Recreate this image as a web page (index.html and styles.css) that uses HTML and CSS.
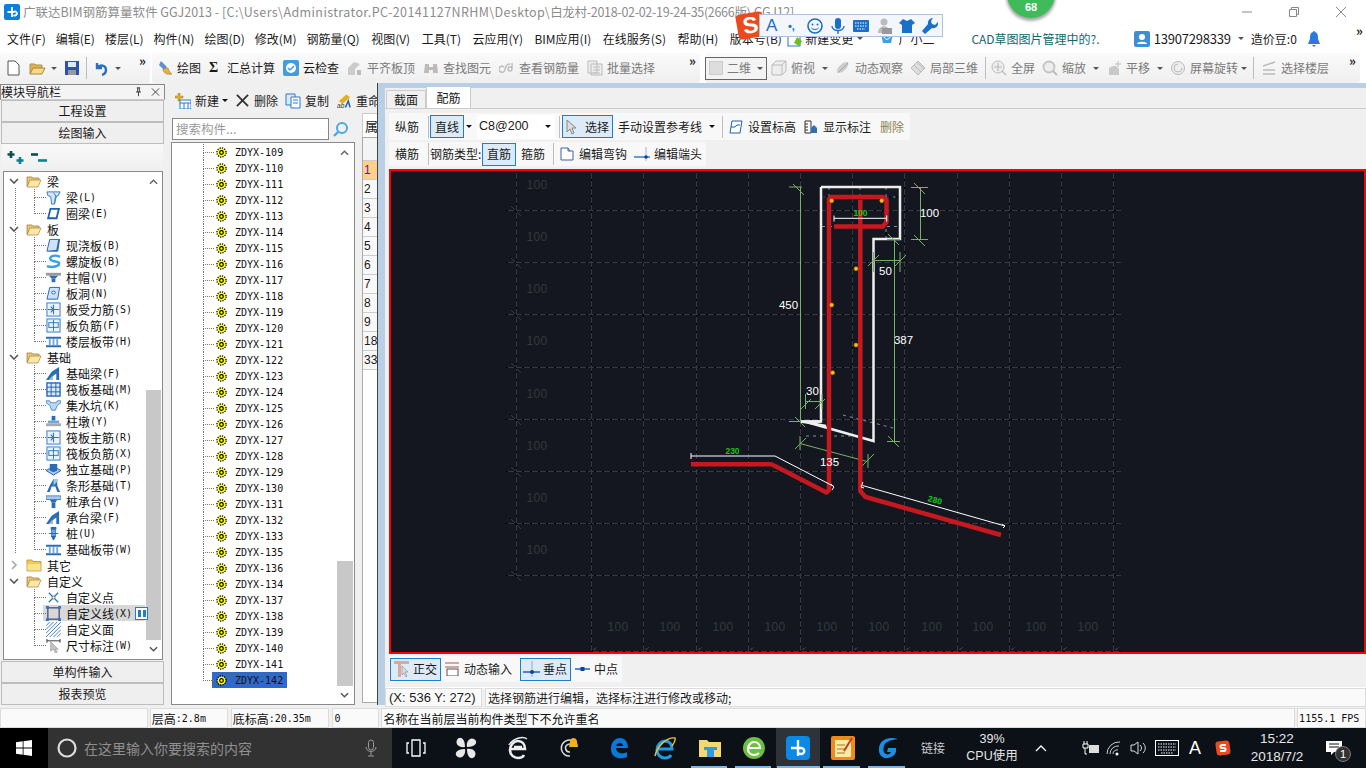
FILE: index.html
```html
<!DOCTYPE html>
<html lang="zh-CN">
<head>
<meta charset="utf-8">
<title>广联达BIM钢筋算量软件 GGJ2013</title>
<link rel="stylesheet" href="styles.css">
</head>
<body>
<svg class="defs" aria-hidden="true">
  <symbol id="gear" viewBox="0 0 12 12"><circle cx="6" cy="6" r="4.6" fill="#ff0"/><circle cx="6" cy="6" r="5" fill="none" stroke="#000" stroke-width="1.400" stroke-dasharray="1.400 1.200"/><circle cx="6" cy="6" r="2" fill="none" stroke="#000" stroke-width="1.300"/></symbol>
  <symbol id="fopen" viewBox="0 0 16 16"><path d="M1 13V4h5l1 1h6v3H4z" fill="#e8c56f" stroke="#9a7a30" stroke-width=".7"/><path d="M1 14l3-7h11l-3 7z" fill="#fbe8a8" stroke="#a88838" stroke-width=".7"/></symbol>
  <symbol id="fclosed" viewBox="0 0 16 16"><path d="M1 14V3h5l1 1.500h8V14z" fill="#f4c94e" stroke="#a88838" stroke-width=".7"/><path d="M1.500 7h13v6.500h-13z" fill="#fbe38c"/></symbol>
  <symbol id="chevd" viewBox="0 0 10 6"><path d="M1 1l4 4 4-4" fill="none" stroke="#555" stroke-width="1.600"/></symbol>
  <symbol id="chevu" viewBox="0 0 10 6"><path d="M1 5l4-4 4 4" fill="none" stroke="#666" stroke-width="1.600"/></symbol>
  <symbol id="chevr" viewBox="0 0 6 10"><path d="M1 1l4 4-4 4" fill="none" stroke="#aaa" stroke-width="1.600"/></symbol>
  <symbol id="beam" viewBox="0 0 16 16"><path d="M1 2h14l-2 4-3 1-1 8H6L5 7 2 6z" fill="#d4e6f8" stroke="#2a78c8"/><path d="M8 3l3 4-2 8" fill="none" stroke="#2a78c8"/></symbol>
  <symbol id="ring" viewBox="0 0 16 16"><path d="M4 2h11l-3 12H1zM5.500 4l-2 8h7l2-8z" fill-rule="evenodd" fill="#2060b0"/></symbol>
  <symbol id="slab" viewBox="0 0 16 16"><path d="M4 1.500h10.500l-2 12.500H1z" fill="#cfe2f8" stroke="#1f5fb0"/><path d="M1.500 14l11 0 2-12.500-1.500 0-2 11z" fill="#2a6cc0"/></symbol>
  <symbol id="spiral" viewBox="0 0 16 16"><path d="M15 3C8 0 3 3 5 6s9 1 9 4-7 5-13 3" fill="none" stroke="#3aa0e8" stroke-width="2.600"/></symbol>
  <symbol id="cap" viewBox="0 0 16 16"><rect y="3" width="16" height="3" fill="#999"/><path d="M3 6h10l-3 3H6z" fill="#2a6cb8"/><rect x="6" y="9" width="4" height="4" fill="#2a6cb8"/></symbol>
  <symbol id="hole" viewBox="0 0 16 16"><path d="M4 1.500h10.500l-2 12.500H1z" fill="#cfe2f8" stroke="#1f5fb0"/><ellipse cx="8" cy="7" rx="2" ry="1.500" fill="#fff" stroke="#1f5fb0"/></symbol>
  <symbol id="sqcross" viewBox="0 0 16 16"><rect x="1" y="1" width="14" height="14" fill="#eaf3fd" stroke="#2a78c8"/><path d="M2 8h12M8 3v10M5 5l3 3-3 3" fill="none" stroke="#2a78c8" stroke-width="1.200"/></symbol>
  <symbol id="sqzhong" viewBox="0 0 16 16"><rect x="1" y="1" width="14" height="14" fill="#eaf3fd" stroke="#2a78c8"/><rect x="3" y="5" width="10" height="5" fill="none" stroke="#2a78c8"/><path d="M8 2v12" stroke="#2a78c8"/></symbol>
  <symbol id="band" viewBox="0 0 16 16"><path d="M0 3h16v2H0zM0 12h16v2H0z" fill="#2a6cb8"/><path d="M3 5h2v7H3zM7 5h2v7H7zM11 5h2v7h-2z" fill="#6fa8dc"/></symbol>
  <symbol id="fbeam" viewBox="0 0 16 16"><path d="M0 15l6-9 8-5v14h-3V8l-4 3v4z" fill="#2a6cb8"/><path d="M3 15l4-5v5z" fill="#9cc4ec"/></symbol>
  <symbol id="raft" viewBox="0 0 16 16"><rect x="1" y="1" width="14" height="14" fill="#dbe9f8" stroke="#1f5fb0" stroke-width="1.400"/><path d="M5.500 1v14M10.500 1v14M1 5.500h14M1 10.500h14" stroke="#1f5fb0"/></symbol>
  <symbol id="pit" viewBox="0 0 16 16"><path d="M0 3h4l1 2h6l1-2h4v2l-4 3-2 5H6L4 8 0 5z" fill="#bcd6ef" stroke="#2a78c8" stroke-width=".8"/></symbol>
  <symbol id="pier" viewBox="0 0 16 16"><rect x="6" y="2" width="4" height="5" fill="#2a6cb8"/><rect x="2" y="7" width="12" height="3" fill="#6fa8dc"/><rect y="10" width="16" height="3" fill="#aaa"/></symbol>
  <symbol id="iso" viewBox="0 0 16 16"><path d="M0 9l8-4 8 4-8 5z" fill="#a9c9ea" stroke="#1f5fb0"/><path d="M4 2h8v7l-4 2-4-2z" fill="#2a6cb8"/></symbol>
  <symbol id="strip" viewBox="0 0 16 16"><path d="M1 15l3-7 4-7h4v7l3 7h-3l-2-6H6l-2 6z" fill="#2a6cb8"/><path d="M8 1h4v3l-4 4z" fill="#9cc4ec"/></symbol>
  <symbol id="pcap" viewBox="0 0 16 16"><rect y="2" width="16" height="4" fill="#a9c9ea" stroke="#1f5fb0" stroke-width=".7"/><path d="M4 6h8l-2 3H6z" fill="#2a6cb8"/><rect x="6" y="9" width="4" height="6" fill="#2a6cb8"/></symbol>
  <symbol id="pile" viewBox="0 0 16 16"><rect x="5" y="1" width="6" height="3" fill="#2a6cb8"/><rect x="6" y="4" width="4" height="7" fill="#6fa8dc" stroke="#1f5fb0" stroke-width=".7"/><path d="M3 8h10M6 11h4l-2 4z" stroke="#1f5fb0" fill="#2a6cb8"/></symbol>
  <symbol id="point" viewBox="0 0 16 16"><path d="M3 3l10 10M13 3L3 13" stroke="#2a78c8" stroke-width="1.400"/><circle cx="8" cy="8" r="1.600" fill="#fff" stroke="#333" stroke-width=".6"/></symbol>
  <symbol id="line" viewBox="0 0 16 16"><rect x="2" y="2" width="12" height="12" fill="none" stroke="#111a55"/><path d="M0 0h3v3H0zM13 0h3v3h-3zM0 13h3v3H0zM13 13h3v3h-3z" fill="#2a78c8"/></symbol>
  <symbol id="hatch" viewBox="0 0 16 16"><path d="M0 4L4 0M0 8l8-8M0 12L12 0M0 16L16 0M4 16L16 4M8 16l8-8M12 16l4-4" stroke="#3b7fc8"/></symbol>
  <symbol id="dim" viewBox="0 0 16 16"><path d="M1 1v4M15 1v4M1 3h14" stroke="#333"/><path d="M5 4v10l3-2 2 4 2-1-2-3h3z" fill="#c4c4c4" stroke="#888" stroke-width=".6"/></symbol>
</svg>

<div class="app">
  <header class="titlebar">
    <svg class="logo" viewBox="0 0 16 16"><rect width="16" height="16" rx="2" fill="#0a7fe0"/><path d="M8 3v10M3.500 8h6a2 2 0 1 1 0 3" fill="none" stroke="#fff" stroke-width="1.800"/></svg>
    <span class="title-text">广联达BIM钢筋算量软件 GGJ2013 - <span class="t-path">[C:\Users\Administrator.PC-20141127NRHM\Desktop\</span><span class="t-file">白龙村-2018-02-02-19-24-35(2666版).GGJ12]</span></span>
    <div class="winctl">
      <svg viewBox="0 0 12 12"><path d="M1 6h10" stroke="#888"/></svg>
      <svg viewBox="0 0 12 12"><path d="M1.500 3.500h7v7h-7zM3.500 3.500v-2h7v7h-2" fill="none" stroke="#888"/></svg>
      <svg viewBox="0 0 12 12"><path d="M1 1l10 10M11 1L1 11" stroke="#888"/></svg>
    </div>
  </header>

  <nav class="menubar">
    <span class="menu">文件(F)</span><span class="menu">编辑(E)</span><span class="menu">楼层(L)</span><span class="menu">构件(N)</span><span class="menu">绘图(D)</span><span class="menu">修改(M)</span><span class="menu">钢筋量(Q)</span><span class="menu">视图(V)</span><span class="menu">工具(T)</span><span class="menu">云应用(Y)</span><span class="menu">BIM应用(I)</span><span class="menu">在线服务(S)</span><span class="menu">帮助(H)</span><span class="menu">版本号(B)</span>
    <svg class="ic16 m-change" viewBox="0 0 16 16"><rect x="1" y="1" width="12" height="14" fill="#fff" stroke="#2a78c8"/><path d="M10 6l5 4-3 5-5-3z" fill="#6cc020"/></svg>
    <span class="menu m-tight">新建变更</span><span class="arrow ml4"></span>
    <svg class="ic16 m-xiao" viewBox="0 0 16 16"><path d="M2 3h12l-2 9H4z" fill="#3aa0e8"/><path d="M5 6c1 3 5 3 6 0" fill="none" stroke="#fff"/></svg>
    <span class="menu m-tight2">广小二</span>
    <span class="cad-note">CAD草图图片管理中的?.</span>
    <svg class="ic16 m-user" viewBox="0 0 16 16"><rect width="16" height="16" rx="2" fill="#3f8fd0"/><circle cx="8" cy="6" r="3" fill="#fff"/><path d="M3 13c0-3 10-3 10 0z" fill="#fff"/></svg>
    <span class="user-id">13907298339</span><span class="arrow ml7"></span>
    <span class="beans">造价豆:0</span>
    <svg class="ic16 m-bell" viewBox="0 0 16 16"><path d="M8 0c-1 0-1 1-1 1C4 2 4 5 4 8l-2 5h12l-2-5c0-3 0-6-3-7 0 0 0-1-1-1zM6 14h4l-2 2z" fill="#2a78e0"/></svg>
    <span class="more more-menu">»</span>
  </nav>

  <section class="toolbar">
    <div class="tgroup g1">
      <svg class="ic-new" viewBox="0 0 13 16"><path d="M1 1h7l4 4v10H1z" fill="#fff" stroke="#555"/></svg>
      <svg class="ic-open ml9" viewBox="0 0 17 16"><path d="M1 14V4h5l1 1h6v3" fill="#e8b040" stroke="#996"/><path d="M1 14l3-6h12l-3 6z" fill="#f7d98a" stroke="#a88838"/></svg>
      <span class="arrow ml5"></span>
      <svg class="ic-save ml8" viewBox="0 0 14 14"><rect width="14" height="14" fill="#3050b0"/><rect x="3" y="1" width="8" height="5" fill="#dfe8f8"/><rect x="3" y="9" width="8" height="5" fill="#999"/></svg>
      <i class="vsep ml7"></i>
      <svg class="ic-undo ml7" viewBox="0 0 14 16"><path d="M3 3v5h5M3 8c3-4 9-3 9 2 0 2-1 4-4 5" fill="none" stroke="#2a70c0" stroke-width="2.400"/></svg>
      <span class="arrow ml7"></span>
      <span class="more more-1">»</span>
    </div>
    <div class="tgroup g2">
      <div class="tool"><svg class="ic16" viewBox="0 0 16 16"><path d="M4 1l6 6-3 3-5-5z" fill="#5a8fd0"/><path d="M6 9c0 4 4 6 9 5-2-1-3-3-4-6z" fill="#e8b040" stroke="#a08030" stroke-width=".6"/></svg>绘图</div>
      <div class="tool"><b class="sigma">Σ</b>汇总计算</div>
      <div class="tool"><svg class="ic16" viewBox="0 0 16 16"><rect width="16" height="16" rx="2" fill="#3f9de0"/><circle cx="8" cy="8" r="5" fill="#fff"/><path d="M5 8l2 2 4-4" fill="none" stroke="#3f9de0" stroke-width="1.500"/></svg>云检查</div>
      <div class="tool off"><svg class="ic16" viewBox="0 0 16 16"><path d="M1 15V8l6-6 6 2-5 5v6z" fill="#ccc"/><path d="M10 10h4v5h-4z" fill="#bbb"/></svg>平齐板顶</div>
      <div class="tool off"><svg class="ic16" viewBox="0 0 16 16"><path d="M2 4h4v9H1zM10 4h4l1 9h-5zM6 7h4v3H6z" fill="#bbb"/></svg>查找图元</div>
      <div class="tool off"><svg class="ic16" viewBox="0 0 16 16"><path d="M5 7a3 3 0 1 0 1 2c1-4 3-5 5-5M9 9a2 2 0 1 0 4 0 2 2 0 1 0-4 0M13 9V3" fill="none" stroke="#bbb" stroke-width="1.400"/></svg>查看钢筋量</div>
      <div class="tool off"><svg class="ic16" viewBox="0 0 16 16"><path d="M1 1h9v12H1zM4 4h11v11H4z" fill="#eee" stroke="#bbb"/><path d="M6 7h7M6 10h7M6 13h7" stroke="#bbb"/></svg>批量选择</div>
      <span class="more more-2">»</span>
    </div>
    <div class="tgroup g3">
      <div class="view-select"><i class="swatch"></i>二维<span class="arrow ml9"></span></div>
      <div class="tool off tool-first"><svg class="ic16" viewBox="0 0 16 16"><path d="M1 5l4-4h10v10l-4 4H1zM1 5h10v10M11 5l4-4" fill="#eee" stroke="#bbb"/></svg>俯视</div>
      <span class="arrow"></span>
      <div class="tool off"><svg class="ic16" viewBox="0 0 16 16"><path d="M2 13C1 8 8 1 13 2c2 4-5 12-11 11z" fill="#ccc"/><path d="M4 12L13 3" stroke="#aaa"/></svg>动态观察</div>
      <div class="tool off"><svg class="ic16" viewBox="0 0 16 16"><path d="M1 8l7-7 7 7-7 7z" fill="#ddd" stroke="#bbb"/><path d="M4 5l7 7M7 2l7 7" stroke="#bbb"/></svg>局部三维</div>
      <i class="vsep"></i>
      <div class="tool off tool-near"><svg class="ic16" viewBox="0 0 16 16"><circle cx="7" cy="7" r="6" fill="#eee" stroke="#bbb"/><path d="M7 3v8M3 7h8M11 11l4 4" stroke="#bbb" stroke-width="1.200"/></svg>全屏</div>
      <div class="tool off"><svg class="ic16" viewBox="0 0 16 16"><circle cx="7" cy="7" r="5.500" fill="#eee" stroke="#c4c4c4" stroke-width="1.800"/><path d="M11 11l4 4" stroke="#bbb" stroke-width="2"/></svg>缩放</div>
      <span class="arrow"></span>
      <div class="tool off"><svg class="ic16" viewBox="0 0 16 16"><path d="M3 15V8l4-2 3 0 3 3v6z" fill="#c8c8c8"/><path d="M12 1v6M9 4h6" stroke="#bbb"/></svg>平移</div>
      <span class="arrow"></span>
      <div class="tool off"><svg class="ic16" viewBox="0 0 16 16"><circle cx="8" cy="8" r="6.500" fill="#eee" stroke="#bbb"/><path d="M8 4a4 4 0 1 0 4 4" fill="none" stroke="#bbb"/></svg>屏幕旋转</div>
      <span class="arrow arrow-tight"></span>
      <i class="vsep"></i>
      <div class="tool off"><svg class="ic16" viewBox="0 0 16 16"><path d="M2 6l12-4M2 10h12M2 14h12" stroke="#bbb" stroke-width="1.600"/></svg>选择楼层</div>
      <span class="more more-3">»</span>
    </div>
  </section>

  <main class="main">
    <aside class="nav">
      <div class="nav-head"><span>模块导航栏</span><span class="nav-ctl"><svg viewBox="0 0 10 12"><path d="M3 1h4M4 1v5M6 1v5M2 6h6M5 6v5" stroke="#222" fill="none"/></svg><svg viewBox="0 0 10 10"><path d="M1 1l8 8M9 1L1 9" stroke="#333"/></svg></span></div>
      <div class="nav-btn">工程设置</div>
      <div class="nav-btn">绘图输入</div>
      <div class="tree-tools">
        <svg class="tt" viewBox="0 0 18 15"><path d="M4 1v7M0.500 4.500h7" stroke="#0a5050" stroke-width="2.600"/><path d="M13 7v7M9.500 10.500h7" stroke="#0a8090" stroke-width="2.600"/></svg>
        <svg class="tt" viewBox="0 0 18 15"><path d="M1 4.500h7" stroke="#0a5050" stroke-width="2.600"/><path d="M8 10.500h9" stroke="#0a8090" stroke-width="2.600"/></svg>
      </div>
      <div class="tree-box">
        <div class="tree-rows">
          <div class="grp"><svg class="chev"><use href="#chevd"/></svg><svg class="folder"><use href="#fopen"/></svg><span class="zh">梁</span></div>
          <div class="leaf"><svg class="lic"><use href="#beam"/></svg><span class="zh">梁</span>(L)</div>
          <div class="leaf end"><svg class="lic"><use href="#ring"/></svg><span class="zh">圈梁</span>(E)</div>
          <div class="grp"><svg class="chev"><use href="#chevd"/></svg><svg class="folder"><use href="#fopen"/></svg><span class="zh">板</span></div>
          <div class="leaf"><svg class="lic"><use href="#slab"/></svg><span class="zh">现浇板</span>(B)</div>
          <div class="leaf"><svg class="lic"><use href="#spiral"/></svg><span class="zh">螺旋板</span>(B)</div>
          <div class="leaf"><svg class="lic"><use href="#cap"/></svg><span class="zh">柱帽</span>(V)</div>
          <div class="leaf"><svg class="lic"><use href="#hole"/></svg><span class="zh">板洞</span>(N)</div>
          <div class="leaf"><svg class="lic"><use href="#sqcross"/></svg><span class="zh">板受力筋</span>(S)</div>
          <div class="leaf"><svg class="lic"><use href="#sqzhong"/></svg><span class="zh">板负筋</span>(F)</div>
          <div class="leaf end"><svg class="lic"><use href="#band"/></svg><span class="zh">楼层板带</span>(H)</div>
          <div class="grp"><svg class="chev"><use href="#chevd"/></svg><svg class="folder"><use href="#fopen"/></svg><span class="zh">基础</span></div>
          <div class="leaf"><svg class="lic"><use href="#fbeam"/></svg><span class="zh">基础梁</span>(F)</div>
          <div class="leaf"><svg class="lic"><use href="#raft"/></svg><span class="zh">筏板基础</span>(M)</div>
          <div class="leaf"><svg class="lic"><use href="#pit"/></svg><span class="zh">集水坑</span>(K)</div>
          <div class="leaf"><svg class="lic"><use href="#pier"/></svg><span class="zh">柱墩</span>(Y)</div>
          <div class="leaf"><svg class="lic"><use href="#sqcross"/></svg><span class="zh">筏板主筋</span>(R)</div>
          <div class="leaf"><svg class="lic"><use href="#sqzhong"/></svg><span class="zh">筏板负筋</span>(X)</div>
          <div class="leaf"><svg class="lic"><use href="#iso"/></svg><span class="zh">独立基础</span>(P)</div>
          <div class="leaf"><svg class="lic"><use href="#strip"/></svg><span class="zh">条形基础</span>(T)</div>
          <div class="leaf"><svg class="lic"><use href="#pcap"/></svg><span class="zh">桩承台</span>(V)</div>
          <div class="leaf"><svg class="lic"><use href="#fbeam"/></svg><span class="zh">承台梁</span>(F)</div>
          <div class="leaf"><svg class="lic"><use href="#pile"/></svg><span class="zh">桩</span>(U)</div>
          <div class="leaf end"><svg class="lic"><use href="#band"/></svg><span class="zh">基础板带</span>(W)</div>
          <div class="grp"><svg class="chev chev-r"><use href="#chevr"/></svg><svg class="folder"><use href="#fclosed"/></svg><span class="zh">其它</span></div>
          <div class="grp"><svg class="chev"><use href="#chevd"/></svg><svg class="folder"><use href="#fopen"/></svg><span class="zh">自定义</span></div>
          <div class="leaf"><svg class="lic"><use href="#point"/></svg><span class="zh">自定义点</span></div>
          <div class="leaf on"><svg class="lic"><use href="#line"/></svg><span class="zh">自定义线</span>(X)<svg class="attr" viewBox="0 0 13 13"><rect x=".5" y=".5" width="12" height="12" fill="#fff" stroke="#2a78c8"/><path d="M3 3h3v7H3zM8 3h3v7H8z" fill="#2a78c8"/></svg></div>
          <div class="leaf"><svg class="lic"><use href="#hatch"/></svg><span class="zh">自定义面</span></div>
          <div class="leaf end"><svg class="lic"><use href="#dim"/></svg><span class="zh">尺寸标注</span>(W)</div>
        </div>
        <div class="sb sb-nav"><svg class="sb-up"><use href="#chevu" x="3" y="7" width="9" height="6"/></svg><i class="sb-space"></i><i class="sb-thumb"></i><svg class="sb-down"><use href="#chevd" x="3" y="6" width="9" height="6"/></svg></div>
      </div>
      <div class="nav-btn nav-btn-low">单构件输入</div>
      <div class="nav-btn">报表预览</div>
    </aside>

    <section class="comp">
      <div class="comp-bar">
        <div class="tool tool-plain"><svg class="ic16" viewBox="0 0 16 16"><path d="M3 0h2v3h3v2H5v3H3V5H0V3h3z" fill="#e0b020" stroke="#a08010" stroke-width=".5"/><rect x="5" y="7" width="11" height="9" fill="#fff" stroke="#2a78c8"/><path d="M5 10h11M9 10v6M13 10v6" stroke="#2a78c8"/></svg>新建<span class="arrow dark arrow-close"></span></div>
        <svg class="ic-del" viewBox="0 0 14 14"><path d="M1 1l12 12M13 1L1 13" stroke="#333" stroke-width="2"/></svg><span class="plain">删除</span>
        <svg class="ic16 ml7" viewBox="0 0 16 16"><path d="M1 1h9v11H1z" fill="#dbe9f8" stroke="#2a78c8"/><path d="M6 4h9v11H6z" fill="#fff" stroke="#2a78c8"/><path d="M8 7h5M8 10h5" stroke="#2a78c8"/></svg><span class="plain near">复制</span>
        <svg class="ic-ren ml8" viewBox="0 0 16 16"><path d="M2 8l8-7 4 3-8 7z" fill="#e0b020"/><text class="ab" x="0" y="15">ab</text><path d="M9 15l3-7 2 7" stroke="#2a60b0" fill="none" stroke-width="1.600"/></svg><span class="plain nearer">重命</span>
      </div>
      <div class="comp-body">
        <div class="comp-list">
          <div class="searchrow"><div class="search">搜索构件...</div><svg class="mag" viewBox="0 0 16 16"><circle cx="9" cy="7" r="5" fill="none" stroke="#4aa8e8" stroke-width="2"/><path d="M5 11l-4 4" stroke="#4aa8e8" stroke-width="2.400"/></svg></div>
          <div class="ztree">
            <div class="zrows">
              <div class="zr"><span class="zl"><svg class="gi"><use href="#gear"/></svg>ZDYX-109</span></div>
              <div class="zr"><span class="zl"><svg class="gi"><use href="#gear"/></svg>ZDYX-110</span></div>
              <div class="zr"><span class="zl"><svg class="gi"><use href="#gear"/></svg>ZDYX-111</span></div>
              <div class="zr"><span class="zl"><svg class="gi"><use href="#gear"/></svg>ZDYX-112</span></div>
              <div class="zr"><span class="zl"><svg class="gi"><use href="#gear"/></svg>ZDYX-113</span></div>
              <div class="zr"><span class="zl"><svg class="gi"><use href="#gear"/></svg>ZDYX-114</span></div>
              <div class="zr"><span class="zl"><svg class="gi"><use href="#gear"/></svg>ZDYX-115</span></div>
              <div class="zr"><span class="zl"><svg class="gi"><use href="#gear"/></svg>ZDYX-116</span></div>
              <div class="zr"><span class="zl"><svg class="gi"><use href="#gear"/></svg>ZDYX-117</span></div>
              <div class="zr"><span class="zl"><svg class="gi"><use href="#gear"/></svg>ZDYX-118</span></div>
              <div class="zr"><span class="zl"><svg class="gi"><use href="#gear"/></svg>ZDYX-119</span></div>
              <div class="zr"><span class="zl"><svg class="gi"><use href="#gear"/></svg>ZDYX-120</span></div>
              <div class="zr"><span class="zl"><svg class="gi"><use href="#gear"/></svg>ZDYX-121</span></div>
              <div class="zr"><span class="zl"><svg class="gi"><use href="#gear"/></svg>ZDYX-122</span></div>
              <div class="zr"><span class="zl"><svg class="gi"><use href="#gear"/></svg>ZDYX-123</span></div>
              <div class="zr"><span class="zl"><svg class="gi"><use href="#gear"/></svg>ZDYX-124</span></div>
              <div class="zr"><span class="zl"><svg class="gi"><use href="#gear"/></svg>ZDYX-125</span></div>
              <div class="zr"><span class="zl"><svg class="gi"><use href="#gear"/></svg>ZDYX-126</span></div>
              <div class="zr"><span class="zl"><svg class="gi"><use href="#gear"/></svg>ZDYX-127</span></div>
              <div class="zr"><span class="zl"><svg class="gi"><use href="#gear"/></svg>ZDYX-128</span></div>
              <div class="zr"><span class="zl"><svg class="gi"><use href="#gear"/></svg>ZDYX-129</span></div>
              <div class="zr"><span class="zl"><svg class="gi"><use href="#gear"/></svg>ZDYX-130</span></div>
              <div class="zr"><span class="zl"><svg class="gi"><use href="#gear"/></svg>ZDYX-131</span></div>
              <div class="zr"><span class="zl"><svg class="gi"><use href="#gear"/></svg>ZDYX-132</span></div>
              <div class="zr"><span class="zl"><svg class="gi"><use href="#gear"/></svg>ZDYX-133</span></div>
              <div class="zr"><span class="zl"><svg class="gi"><use href="#gear"/></svg>ZDYX-135</span></div>
              <div class="zr"><span class="zl"><svg class="gi"><use href="#gear"/></svg>ZDYX-136</span></div>
              <div class="zr"><span class="zl"><svg class="gi"><use href="#gear"/></svg>ZDYX-134</span></div>
              <div class="zr"><span class="zl"><svg class="gi"><use href="#gear"/></svg>ZDYX-137</span></div>
              <div class="zr"><span class="zl"><svg class="gi"><use href="#gear"/></svg>ZDYX-138</span></div>
              <div class="zr"><span class="zl"><svg class="gi"><use href="#gear"/></svg>ZDYX-139</span></div>
              <div class="zr"><span class="zl"><svg class="gi"><use href="#gear"/></svg>ZDYX-140</span></div>
              <div class="zr"><span class="zl"><svg class="gi"><use href="#gear"/></svg>ZDYX-141</span></div>
              <div class="zr end"><span class="zl sel"><svg class="gi"><use href="#gear"/></svg>ZDYX-142</span></div>
            </div>
            <div class="sb sb-comp"><svg class="sb-up"><use href="#chevu" x="3" y="7" width="9" height="6"/></svg><i class="sb-space"></i><i class="sb-thumb"></i><svg class="sb-down"><use href="#chevd" x="3" y="6" width="9" height="6"/></svg></div>
          </div>
        </div>
        <div class="props">
          <div class="props-tab">属</div>
          <div class="props-table">
            <div class="ph"></div>
            <div class="pr cur">1</div><div class="pr">2</div><div class="pr">3</div><div class="pr">4</div><div class="pr">5</div><div class="pr">6</div><div class="pr">7</div><div class="pr">8</div><div class="pr">9</div><div class="pr">18</div><div class="pr">33</div>
          </div>
        </div>
      </div>
    </section>

    <div class="split"></div>

    <section class="editor">
      <div class="tabs"><span class="tab">截面</span><span class="tab cur">配筋</span></div>
      <div class="row row1">
        <span>纵筋</span><i class="vsep ml9"></i>
        <span class="btn ml1 w34">直线</span><span class="arrow dark ml2"></span>
        <div class="combo ml5">C8@200<span class="arrow dark"></span></div>
        <i class="vsep ml4"></i>
        <span class="btn ml2 w51"><svg class="ic-cur" viewBox="0 0 12 16"><path d="M1 1v12l3-3 2 5 2-1-2-5h4z" fill="#ddd" stroke="#888"/></svg>选择</span>
        <span class="ml5">手动设置参考线</span><span class="arrow dark ml7"></span>
        <i class="vsep ml7"></i>
        <svg class="ic14 ml6" viewBox="0 0 14 14"><path d="M3 1h10l-2 12H1z" fill="#fff" stroke="#2060b0"/><path d="M2 7h4l2-2 3 0" fill="none" stroke="#2060b0"/></svg>
        <span class="ml5">设置标高</span>
        <svg class="ic14 ml8" viewBox="0 0 14 14"><path d="M1 1h6v12H1z" fill="none" stroke="#333"/><path d="M7 8l3-3 3 3v5H7z" fill="#3070b0"/><path d="M1 4h3M1 7h3M1 10h3" stroke="#333"/></svg>
        <span class="ml5">显示标注</span>
        <span class="ml9 muted">删除</span>
      </div>
      <div class="row row2">
        <span>横筋</span><i class="vsep ml9"></i>
        <span class="ml1 wtype">钢筋类型:</span>
        <span class="btn ml1 w34">直筋</span>
        <span class="ml5">箍筋</span><i class="vsep ml8"></i>
        <svg class="ic14 ml6" viewBox="0 0 14 14"><path d="M1 1h7l2 3h3v9H1z" fill="#fff" stroke="#4060a0"/><path d="M8 1v3h2" fill="none" stroke="#4060a0"/></svg>
        <span class="ml5">编辑弯钩</span>
        <svg class="ic16 ml7" viewBox="0 0 16 16"><path d="M0 11h16" stroke="#3070c0" stroke-width="1.400"/><path d="M12 1v14" stroke="#99b8d8"/><circle cx="12" cy="11" r="1.800" fill="#1040a0"/></svg>
        <span class="ml4">编辑端头</span>
      </div>

      <div class="canvas">
        <svg class="drawing" viewBox="389 169 977 485">
          <defs>
            <g id="grid">
              <path d="M506 210.500H1121M506 262.500H1121M506 314.500H1121M506 367.500H1121M506 419.500H1121M506 471.500H1121M506 523.500H1121M506 575.500H1121M591 651.500H1121"/>
              <path d="M516.500 171V576M591.500 171V651M643.500 171V651M696.500 171V651M748.500 171V651M800.500 171V651M852.500 171V651M904.500 171V651M957.500 171V651M1009.500 171V651M1061.500 171V651M1113.500 171V651"/>
              <path d="M510 205l11 11M510 257l11 11M510 309l11 11M510 362l11 11M510 414l11 11M510 466l11 11M510 518l11 11M510 570l11 11M592 651l5-4M644 651l5-4M697 651l5-4M749 651l5-4M801 651l5-4M853 651l5-4M905 651l5-4M958 651l5-4M1010 651l5-4M1062 651l5-4M1114 651l5-4"/>
            </g>
          </defs>
          <rect class="bg" x="389" y="169" width="977" height="485"/>
          <use href="#grid" class="grid-base"/>
          <use href="#grid" class="grid-dash"/>
          <g class="glabel">
            <text x="537" y="189">100</text><text x="537" y="241">100</text><text x="537" y="293">100</text><text x="537" y="345">100</text><text x="537" y="398">100</text><text x="537" y="450">100</text><text x="537" y="502">100</text><text x="537" y="554">100</text>
            <text x="618" y="631">100</text><text x="670" y="631">100</text><text x="723" y="631">100</text><text x="775" y="631">100</text><text x="827" y="631">100</text><text x="879" y="631">100</text><text x="932" y="631">100</text><text x="983" y="631">100</text><text x="1036" y="631">100</text><text x="1088" y="631">100</text>
          </g>
          <path class="guide" d="M823 197H900M822 226.500H835M887 226.500H900M886 187V239M829 187V200M860 187V197M843 415l50 13M806 436H860"/>
          <path class="guide-k" d="M823 197H900M886 200V238"/>
          <polyline class="profile" points="821,187 900,187 900,239 873.500,239 873.500,441 810,423 801,421.500 821,421.500 821,187"/>
          <path class="cover" d="M801 421.500H821M826 426l-16-3"/>
          <path class="gdim" d="M800.500 187V421.500M789 187h13M793 184l11 11M920.500 187.500V239.500M911 187.500h17M914 183l11 11M911 239.500h17M914 235l11 11M873.500 260.500H900M873.500 252V272M868 266l11-11M900 252V272M895 266l11-11M894.500 239.500V441.500M887 239.500h13M888 234l11 11M887 441.500h13M888 436l11 11M805.500 401.500H822M805.500 394V409M801 409l10-10M822 394V409M815 409l10-10M800 443.500L867 461.500M795 449l11-11M800 436v14M868 454v14M861 467l13-13M789 421.500h11M795 417l10 10"/>
          <polyline class="rebar" points="834,226.500 883,226.500 886.500,222 886.500,200 883,197 831,197 829,199 829,490 826.500,492.500 775,466 771,464.300 691,464.300"/>
          <polyline class="rebar" points="860.300,200 860.300,491 865.500,497 1001,535"/>
          <path class="thin" d="M834 218.300H886.700M834 215.500v6M886.700 215.500v6M691 456H775L834 486.500M691 453v6M831 484l3 3-2 3M862.500 485.500L1005 526M863 482l-2 5 3 1M1002 524l3 2-2 2"/>
          <g class="dots"><circle cx="831.700" cy="200.700" r="2"/><circle cx="881.700" cy="200.700" r="2"/><circle cx="856" cy="268.700" r="2"/><circle cx="831.700" cy="305" r="2"/><circle cx="856" cy="345" r="2"/><circle cx="832.700" cy="372.700" r="2"/></g>
          <g class="dimtxt">
            <text x="788.500" y="309">450</text><text x="929.500" y="217">100</text><text x="885.500" y="275">50</text><text x="903.500" y="344">387</text><text x="812.500" y="395">30</text><text x="829.500" y="466">135</text>
          </g>
          <g class="greentxt">
            <text x="860.500" y="216">100</text><text x="732.500" y="454">230</text><text x="935" y="503" transform="rotate(16 935 500)">280</text>
          </g>
        </svg>
      </div>

      <div class="snapbar">
        <span class="btn ml1 w51 btn-snap"><svg class="ic-ortho" viewBox="0 0 17 18"><path d="M1 1h15v3H8v13H5V4H1z" fill="#d9a8a0"/><path d="M9 6l6 6-3 0 2 4-1 1-2-4-2 2z" fill="#ddd" stroke="#888" stroke-width=".6"/></svg>正交</span>
        <svg class="ic14 ml4" viewBox="0 0 14 14"><path d="M0 1h14M0 5h14" stroke="#a05a50" stroke-width="1.200"/><rect x="2" y="7" width="11" height="7" fill="#fff" stroke="#555"/></svg>
        <span class="ml5">动态输入</span>
        <span class="btn ml8 w51 btn-snap"><svg class="ic-ortho" viewBox="0 0 17 18"><path d="M0 12h17" stroke="#2f6cc0" stroke-width="1.600"/><path d="M9 1v16" stroke="#8ab0d8"/><circle cx="9" cy="12" r="2" fill="#123f9a"/></svg>垂点</span>
        <svg class="ic15 ml4" viewBox="0 0 15 6"><path d="M0 3h15" stroke="#2f6cc0" stroke-width="1.600"/><rect x="5.500" y="1" width="4" height="4" fill="#123f9a"/></svg>
        <span class="ml4">中点</span>
      </div>

      <div class="msgbar"><div class="coords">(X: 536 Y: 272)</div><div class="msg">选择钢筋进行编辑，选择标注进行修改或移动;</div></div>
    </section>
  </main>

  <footer class="status">
    <div class="cell s1"></div>
    <div class="cell s2"><span class="zh">层高</span>:2.8m</div>
    <div class="cell s3"><span class="zh">底标高</span>:20.35m</div>
    <div class="cell s4">0</div>
    <div class="cell s5"><span class="zh">名称在当前层当前构件类型下不允许重名</span></div>
    <div class="cell s6">1155.1 FPS</div>
  </footer>

  <div class="taskbar">
    <div class="start"><svg viewBox="0 0 16 16"><path d="M0 2.300l6.700-1V7.500H0zM7.500 1.200L16 0v7.500H7.500zM0 8.400h6.700v6.300l-6.700-1zM7.500 8.400H16V16l-8.500-1.200z" fill="#fff"/></svg></div>
    <div class="tsearch">
      <svg class="cortana" viewBox="0 0 20 20"><circle cx="10" cy="10" r="8.500" fill="none" stroke="#ddd" stroke-width="2.200"/></svg>
      <span class="tsearch-text">在这里输入你要搜索的内容</span>
      <svg class="mic" viewBox="0 0 12 18"><rect x="3.500" y="1" width="5" height="10" rx="2.500" fill="none" stroke="#999"/><path d="M1 8c0 6 10 6 10 0M6 13v4M3 17h6" fill="none" stroke="#999"/></svg>
    </div>
    <div class="tk w48"><svg viewBox="0 0 20 20"><path d="M6 2h8v16H6zM3 5H1v10h2M17 5h2v10h-2" fill="none" stroke="#fff" stroke-width="1.300"/></svg></div>
    <div class="tk w52"><svg class="big" viewBox="0 0 24 24"><path d="M11 11C5 12 1 8 3 4s8-3 8 7zM13 11c-1-6 3-10 7-8s3 8-7 8zM13 13c6-1 10 3 8 7s-8 3-8-7zM11 13c1 6-3 10-7 8s-3-8 7-8z" fill="#e8e8e8"/></svg></div>
    <div class="tk w52"><svg class="big" viewBox="0 0 24 24"><path d="M5 13h14c0-5-3-8-7-8s-8 4-8 9 4 8 8 8c3 0 5-1 6-3M8 11h8" fill="none" stroke="#eee" stroke-width="2.600"/><path d="M3 9C7 2 17 0 21 3" fill="none" stroke="#eee" stroke-width="1.400"/></svg></div>
    <div class="tk w52"><svg class="big" viewBox="0 0 24 24"><path d="M12 20a8 8 0 1 1 7-10M12 16a4 4 0 1 1 3-6" fill="none" stroke="#ddd" stroke-width="1.500"/><path d="M15 2a4 4 0 0 1 4 4l1 5H11l1-5a4 4 0 0 1 3-4z" fill="#f2b01e"/></svg></div>
    <div class="tk w46"><svg class="big" viewBox="0 0 24 24"><path d="M4 13c0-7 4-11 9-11 5 0 8 4 8 10H9c0 5 6 7 11 4v5c-7 3-16 1-16-8zm5-3h7c0-4-6-4-7 0z" fill="#0a78d7"/></svg></div>
    <div class="tk w46"><svg class="big" viewBox="0 0 24 24"><path d="M5 13h14c0-5-3-8-7-8s-8 4-8 9 4 8 8 8c3 0 5-1 6-3" fill="none" stroke="#1e9be6" stroke-width="3"/><path d="M2 20C4 10 14 1 22 2c1 3-2 6-3 8" fill="none" stroke="#f0c23c" stroke-width="1.400"/></svg></div>
    <div class="tk w44 run u36"><svg class="big" viewBox="0 0 24 24"><path d="M1 4h8l2 2h12v15H1z" fill="#f5d774"/><rect x="9" y="13" width="7" height="8" fill="#2e9be6"/><rect x="6" y="11" width="13" height="3" fill="#2e9be6"/></svg></div>
    <div class="tk w44 run u36"><svg class="big" viewBox="0 0 24 24"><circle cx="12" cy="12" r="11" fill="#6cc040"/><path d="M6 12h12c0-4-3-6-6-6s-6 3-6 7 3 6 6 6c2 0 4-1 5-2" fill="none" stroke="#fff" stroke-width="2.200"/></svg></div>
    <div class="tk w44 run active u44"><svg class="big" viewBox="0 0 24 24"><rect width="24" height="24" rx="4" fill="#0a8ae6"/><path d="M12 4v16M5 12h10a3 3 0 1 1-2 5" fill="none" stroke="#fff" stroke-width="2.400"/></svg></div>
    <div class="tk w45 run u36"><svg class="big" viewBox="0 0 24 24"><rect width="24" height="24" rx="2" fill="#f08a1e"/><rect x="4" y="4" width="16" height="17" fill="#fbe9a8"/><path d="M6 9h8M6 13h8M6 17h8" stroke="#b07020"/><path d="M21 2l-8 13" stroke="#c0401a" stroke-width="2"/></svg></div>
    <div class="tk w45 run u36"><svg class="big" viewBox="0 0 24 24"><path d="M22 3c-10-3-18 1-19 9-1 7 4 11 9 10 5-1 9-4 8-10h-8l-1 4h4c-1 2-3 3-5 2-3-1-3-5-2-8 1-4 6-6 14-7z" fill="#1a8fe8"/></svg></div>
    <div class="tktext w46">链接</div>
    <div class="cpu">39%<br>CPU使用</div>
    <div class="tk w26"><svg class="small" viewBox="0 0 14 14"><path d="M2 10l5-5 5 5" fill="none" stroke="#fff" stroke-width="1.300"/></svg></div>
    <div class="tray ml24"><svg viewBox="0 0 18 16"><path d="M3 1v3M6 1v3M2 4h5v4H2zM4 8v6h2" fill="none" stroke="#fff"/><rect x="8" y="5" width="10" height="8" fill="#ddd"/></svg></div>
    <div class="tray"><svg viewBox="0 0 18 16"><path d="M2 14a12 12 0 0 1 13-12M5 14a8 8 0 0 1 9-8M8 14a4 4 0 0 1 5-4" fill="none" stroke="#ccc"/><circle cx="12" cy="14" r="1.500" fill="#fff"/></svg></div>
    <div class="tray w22"><svg viewBox="0 0 18 16"><path d="M2 5h3l4-3v12l-4-3H2zM11 5c2 2 2 4 0 6M14 3c3 3 3 7 0 10" fill="none" stroke="#ddd"/></svg></div>
    <div class="tray kbd ml2"><svg viewBox="0 0 24 16"><rect x=".5" y=".5" width="23" height="15" fill="none" stroke="#fff"/><path d="M3 4h18M3 7h18M3 10h18M6 13h12" stroke="#fff" stroke-dasharray="1.500 1"/></svg></div>
    <div class="ime-a">A</div>
    <div class="tray kbd"><svg class="s-tray" viewBox="0 0 16 16"><rect x="1" y="1" width="14" height="14" rx="3" fill="#ec4a1c" transform="rotate(-8 8 8)"/><path d="M11 5H7a1.500 1.500 0 0 0 0 3h2a1.500 1.500 0 0 1 0 3H5" fill="none" stroke="#fff" stroke-width="2"/></svg></div>
    <div class="clock">15:22<br>2018/7/2</div>
    <div class="notif"><svg viewBox="0 0 16 16"><path d="M0 1h16v11H8l-3 3v-3H0z" fill="#fff"/><path d="M3 4h10M3 7h10" stroke="#111"/></svg><span class="badge">1</span></div>
  </div>
</div>

<div class="orb"><span>68</span></div>
<div class="ime-s">S</div>
<div class="ime">
  <span class="ime-letter">A</span>
  <span class="ime-comma">•,</span>
  <svg viewBox="0 0 16 16"><circle cx="8" cy="8" r="7" fill="none" stroke="#1a6fc8" stroke-width="1.600"/><circle cx="5.500" cy="6.500" r="1" fill="#1a6fc8"/><circle cx="10.500" cy="6.500" r="1" fill="#1a6fc8"/><path d="M4.500 10c1 2 6 2 7 0" fill="none" stroke="#1a6fc8"/></svg>
  <svg viewBox="0 0 16 16"><rect x="5" y="0" width="6" height="11" rx="3" fill="#1a6fc8"/><path d="M2 8c0 6 12 6 12 0M8 13v3" fill="none" stroke="#1a6fc8" stroke-width="1.400"/></svg>
  <svg viewBox="0 0 16 16"><rect y="2" width="16" height="12" rx="1" fill="#1a6fc8"/><path d="M2 5h12M2 8h12M4 11h8" stroke="#fff" stroke-dasharray="1.500 1"/></svg>
  <svg viewBox="0 0 16 16"><circle cx="8" cy="4" r="3.500" fill="#bbb"/><path d="M2 15c0-9 12-9 12 0z" fill="#bbb"/><rect x="6" y="10" width="10" height="6" fill="#999"/></svg>
  <svg viewBox="0 0 16 16"><path d="M4 1l4 2 4-2 4 4-3 2v8H3V7L0 5z" fill="#1a6fc8"/></svg>
  <svg viewBox="0 0 16 16"><path d="M11 0a5 5 0 0 0-5 6l-6 7 3 3 7-6a5 5 0 0 0 6-6l-3 3-3-1-1-3z" fill="#1a6fc8"/></svg>
</div>
</body>
</html>
```
FILE: styles.css
```css
* { box-sizing: border-box; }
html, body { margin: 0; padding: 0; width: 1366px; height: 768px; overflow: hidden; }
body { position: relative; font-family: "Noto Sans CJK SC", "Liberation Sans", sans-serif; font-size: 12px; color: #1a1a1a; background: #f0f0f0; line-height: 1; }
.defs { position: absolute; width: 0; height: 0; }
i { display: block; font-style: normal; }
svg { display: block; flex: none; }

.ml1 { margin-left: 1px; } .ml2 { margin-left: 2px; } .ml4 { margin-left: 4px; } .ml5 { margin-left: 5px; }
.ml6 { margin-left: 6px; } .ml7 { margin-left: 7px; } .ml8 { margin-left: 8px; } .ml9 { margin-left: 9px; } .ml24 { margin-left: 24px; }

.app { display: flex; flex-direction: column; width: 1366px; height: 768px; }

/* title */
.titlebar { height: 24px; background: #fff; display: flex; align-items: center; padding-left: 4px; color: #8c8c8c; font-size: 12.500px; }
.logo { width: 16px; height: 16px; margin-right: 3px; }
.title-text { white-space: nowrap; }
.t-path { letter-spacing: .4px; }
.t-file { letter-spacing: -.3px; }
.winctl { margin-left: auto; display: flex; align-items: center; }
.winctl svg { width: 12px; height: 12px; margin-right: 35px; }
.winctl svg:last-child { margin-right: 19px; }

/* menu */
.menubar { height: 29px; background: #fff; display: flex; align-items: center; padding-left: 7px; white-space: nowrap; position: relative; }
.menu { margin-right: 10px; }
.menu:nth-child(n+7) { margin-right: 11.500px; }
.m-change { margin-left: -6px; margin-right: 2px; }
.menu.m-tight { margin-right: 0; }
.m-xiao { margin-left: 16px; margin-right: 3px; }
.menu.m-tight2 { margin-right: 0; }
.cad-note { margin-left: 37px; color: #0c6a70; }
.m-user { margin-left: 34px; margin-right: 4px; }
.user-id { font-size: 13px; letter-spacing: -.2px; }
.beans { margin-left: 7px; }
.m-bell { margin-left: 9px; }
.more { font-weight: 700; font-size: 13px; color: #222; line-height: 10px; }
.more-menu { position: absolute; right: 3px; top: 2px; }

.arrow { display: block; flex: none; width: 0; height: 0; border-left: 3px solid transparent; border-right: 3px solid transparent; border-top: 3px solid #555; }
.arrow.dark { border-top-color: #111; }

/* toolbar */
.toolbar { height: 30px; background: #fff; display: flex; }
.tgroup { height: 30px; display: flex; align-items: center; background: linear-gradient(#fafafa, #efefef); border-radius: 3px; position: relative; }
.g1 { width: 150px; padding-left: 7px; }
.g2 { width: 548px; margin-left: 2px; padding-left: 5px; gap: 8px; }
.g3 { width: 655px; margin-left: 5px; gap: 7px; }
.more-1, .more-2, .more-3 { position: absolute; top: 3px; right: 4px; }
.ic-new { width: 13px; height: 16px; }
.ic-open { width: 17px; height: 16px; }
.ic-save { width: 14px; height: 14px; }
.ic-undo { width: 14px; height: 16px; }
.ic16 { width: 16px; height: 16px; }
.ic14 { width: 14px; height: 14px; }
.ic15 { width: 15px; height: 6px; }
.ic-ren { width: 15px; height: 16px; }
.vsep { width: 1px; height: 22px; background: #bdbdbd; flex: none; }
.tool { display: flex; align-items: center; gap: 4px; white-space: nowrap; }
.tool.off { color: #7a7a7a; }
.tool-first { margin-left: -3px; }
.sigma { font: 700 14px "Liberation Serif", serif; width: 10px; margin-right: 4px; }
.view-select { width: 62px; height: 23px; border: 1px solid #666; display: flex; align-items: center; padding-left: 3px; gap: 4px; color: #7a7a7a; background: #f3f3f3; }
.view-select .arrow { margin-left: auto; margin-right: 3px; }
.swatch { width: 14px; height: 14px; background: #ddd; border: 1px solid #ccc; }
.tool-near { margin-left: -2px; }
.arrow-tight { margin-left: -4px; margin-right: -1px; }

/* main */
.main { height: 625px; display: flex; }
.nav { width: 165px; display: flex; flex-direction: column; padding-top: 1px; }
.nav-head { height: 16px; border: 1px solid #888; border-bottom-color: #ccc; display: flex; align-items: center; justify-content: space-between; padding-right: 4px; overflow: hidden; background: #f4f4f4; }
.nav-ctl { display: flex; gap: 8px; }
.nav-ctl svg { width: 9px; height: 10px; }
.nav-btn { height: 22px; background: #efefef; border: 1px solid #bdbdbd; display: flex; align-items: center; justify-content: center; margin: 0 1px; font-size: 12px; }
.nav-btn-low { margin-top: 1px; }
.tree-tools { height: 27px; display: flex; align-items: center; padding-left: 5px; gap: 5px; background: linear-gradient(#f8f8f8, #f0f0f0); margin: 0 2px; }
.tt { width: 18px; height: 15px; }
.tree-box { height: 489px; margin: 0 2px 0 3px; border: 1px solid #8a8a8a; background: #fff; display: flex; }
.tree-rows { flex: 1; padding-top: 1px; font: 10px "DejaVu Sans Mono", "Noto Sans CJK SC", monospace; color: #111; position: relative; min-width: 0; }
.tree-rows::before { content: ""; position: absolute; left: 11px; top: 16px; height: 365px; border-left: 1px dotted #777; }
.zh { font: 12px "Noto Sans CJK SC", sans-serif; }
.grp, .leaf { height: 16px; display: flex; align-items: center; position: relative; white-space: nowrap; }
.chev { width: 10px; height: 6px; margin-left: 5px; margin-right: 7px; background: #fff; position: relative; z-index: 1; }
.chev-r { width: 6px; height: 10px; margin-left: 7px; margin-right: 9px; }
.folder { width: 16px; height: 16px; margin-right: 5px; }
.leaf { padding-left: 42px; }
.leaf::before { content: ""; position: absolute; left: 30px; top: 0; width: 11px; height: 8px; border-left: 1px dotted #777; border-bottom: 1px dotted #777; }
.leaf::after { content: ""; position: absolute; left: 30px; top: 8px; height: 8px; border-left: 1px dotted #777; }
.leaf.end::after { display: none; }
.lic { width: 15px; height: 15px; margin-right: 5px; }
.leaf.on { background: linear-gradient(#d8d8d8, #d8d8d8) 39px 0 / 102px 16px no-repeat; }
.attr { width: 13px; height: 13px; margin-left: 3px; }

.sb { flex: none; display: flex; flex-direction: column; margin-right: 1px; background: #fff; }
.sb-nav { width: 15px; }
.sb-comp { width: 16px; }
.sb-up, .sb-down { width: 100%; flex: none; }
.sb-nav .sb-up { height: 20px; }
.sb-nav .sb-space { height: 198px; }
.sb-nav .sb-thumb { height: 250px; }
.sb-nav .sb-down { height: 18px; }
.sb-comp .sb-up { height: 20px; }
.sb-comp .sb-space { height: 398px; }
.sb-comp .sb-thumb { height: 125px; }
.sb-comp .sb-down { height: 18px; }
.sb-thumb { background: #c8c8c8; }

/* component list */
.comp { width: 206px; margin-left: 6px; display: flex; flex-direction: column; }
.comp-bar { height: 30px; padding: 5px 0 0 4px; display: flex; align-items: center; overflow: hidden; white-space: nowrap; }
.plain { margin-left: 5px; }
.plain.near { margin-left: 4px; }
.plain.nearer { margin-left: 4px; }
.ic-del { width: 13px; height: 13px; margin-left: 8px; }
.tool-plain { gap: 4px; }
.arrow-close { margin-left: -1px; }
.ab { font: italic 7px "Liberation Sans", sans-serif; fill: #333; }
.comp-body { flex: 1; display: flex; min-height: 0; }
.comp-list { width: 184px; padding-top: 5px; }
.searchrow { height: 22px; display: flex; align-items: center; }
.search { width: 157px; margin-left: 1px; height: 22px; border: 1px solid #888; background: #fff; color: #9a9a9a; font-size: 12.500px; display: flex; align-items: center; padding-left: 3px; }
.mag { width: 16px; height: 16px; margin-left: 4px; }
.ztree { height: 563px; margin-top: 2px; border: 1px solid #8a8a8a; background: #fff; display: flex; }
.zrows { flex: 1; padding-top: 1px; font: 10px "DejaVu Sans Mono", monospace; color: #111; min-width: 0; }
.zr { height: 16px; position: relative; padding-left: 40px; display: flex; align-items: center; }
.zr::before { content: ""; position: absolute; left: 31px; top: 0; width: 10px; height: 8px; border-left: 1px dotted #777; border-bottom: 1px dotted #777; }
.zr::after { content: ""; position: absolute; left: 31px; top: 8px; height: 8px; border-left: 1px dotted #777; }
.zr.end::after { display: none; }
.zl { height: 16px; display: flex; align-items: center; padding: 0 4px; }
.zl.sel { background: #316ac5; }
.gi { width: 11px; height: 11px; margin-right: 8px; }

.props { width: 17px; margin-left: 5px; overflow: hidden; flex: none; }
.props-tab { height: 24px; padding: 5px 0 0 2px; width: 40px; background: #fff; border: 1px solid #ccc; border-bottom: 0; white-space: nowrap; font-size: 13px; margin-left: 2px; }
.props-table { height: 566px; border: 1px solid #aaa; border-right: 0; margin-left: 2px; background: #fff; }
.ph { height: 23px; background: #f4f4f4; border-bottom: 1px solid #ccc; }
.pr { height: 19px; border-bottom: 1px solid #ccc; padding: 3px 0 0 1px; background: #f8f8f8; font-family: "Liberation Sans", sans-serif; white-space: nowrap; text-align: left; }
.pr.cur { background: #fdd08b; color: #602080; }

.split { width: 8px; background: #b8cfe6; border-left: 1px solid #444; margin-bottom: 3px; }

/* editor */
.editor { width: 981px; border-top: 5px solid #b8cfe6; display: flex; flex-direction: column; }
.tabs { height: 21px; display: flex; align-items: flex-end; border-bottom: 1px solid #ccc; padding-left: 1px; }
.tab { width: 40px; height: 18px; background: #f0f0f0; border: 1px solid #ccc; border-bottom: 0; display: flex; align-items: center; justify-content: center; }
.tab.cur { width: 45px; height: 21px; background: #fff; border-top: 0; }
.row { margin-left: 4px; padding-left: 6px; display: flex; align-items: center; background: #f8f8f8; white-space: nowrap; border-radius: 2px; }
.row1 { margin-top: 4px; height: 27px; width: 521px; }
.row2 { margin-top: 2px; height: 24px; width: 317px; }
.btn { height: 23px; border: 1px solid #1a7fd0; background: #dcebf7; display: flex; align-items: center; justify-content: center; flex: none; }
.w34 { width: 34px; } .w51 { width: 51px; }
.combo { width: 78px; height: 24px; background: #fff; display: flex; align-items: center; justify-content: space-between; padding: 0 4px 0 2px; font-family: "Liberation Sans", sans-serif; font-size: 12.500px; }
.ic-cur { width: 12px; height: 16px; margin-right: 7px; }
.muted { color: #8a8450; }
.wtype { width: 51px; }

.canvas { margin: 3px 0 0 4px; width: 977px; height: 485px; }
.drawing { width: 977px; height: 485px; }
.bg { fill: #14171f; stroke: #f00; stroke-width: 4px; }
.grid-base { fill: none; stroke: #353943; shape-rendering: crispEdges; }
.grid-dash { fill: none; stroke: #000; stroke-dasharray: 2 6; shape-rendering: crispEdges; }
.glabel text { font: 12px "Liberation Sans", sans-serif; fill: #343840; text-anchor: middle; letter-spacing: .3px; }
.guide { fill: none; stroke: #8cb0d8; stroke-dasharray: 3 4; stroke-width: 1; opacity: .8; }
.guide-k { fill: none; stroke: #000; stroke-dasharray: 4 4; }
.profile { fill: none; stroke: #eee; stroke-width: 2.500; }
.cover { stroke: #eee; stroke-width: 2.500; fill: none; }
.gdim { fill: none; stroke: #78b068; stroke-width: 1; }
.rebar { fill: none; stroke: #c8181f; stroke-width: 4.500; stroke-linejoin: round; }
.thin { fill: none; stroke: #fff; stroke-width: 1; }
.dots circle { fill: #f0c020; stroke: #c08010; stroke-width: .5; }
.dimtxt text { font: 11.500px "Liberation Sans", sans-serif; fill: #fff; text-anchor: middle; }
.greentxt text { font: 700 8.500px "Liberation Sans", sans-serif; fill: #11c811; text-anchor: middle; }

.snapbar { margin: 2px 0 0 4px; height: 26px; width: 233px; background: #f8f8f8; display: flex; align-items: center; white-space: nowrap; }
.btn-snap { justify-content: flex-start; padding-left: 2px; }
.ic-ortho { width: 17px; height: 18px; margin-right: 3px; }

.msgbar { margin-top: 5px; height: 20px; border-top: 1px solid #fff; display: flex; gap: 3px; }
.coords { width: 97px; height: 19px; border: 1px solid #dcdcdc; background: #fafafa; display: flex; align-items: center; padding-left: 3px; font-family: "Liberation Sans", sans-serif; font-size: 13px; white-space: nowrap; overflow: hidden; }
.msg { flex: 1; height: 19px; border: 1px solid #dcdcdc; background: #fafafa; display: flex; align-items: center; padding-left: 2px; }

/* status */
.status { height: 20px; display: flex; gap: 2px; font: 10px "DejaVu Sans Mono", monospace; color: #111; }
.cell { height: 20px; border: 1px solid #dcdcdc; background: #fafafa; display: flex; align-items: center; padding-left: 1px; white-space: nowrap; overflow: hidden; }
.s1 { width: 148px; } .s2 { width: 78px; } .s3 { width: 98px; margin-left: 1px; } .s4 { width: 48px; margin-left: 1px; padding-left: 2px; } .s5 { width: 915px; } .s6 { width: 69px; }

/* taskbar */
.taskbar { height: 40px; background: #0b1117; display: flex; align-items: center; color: #e6e6e6; position: relative; }
.start { width: 48px; height: 40px; background: #000; display: flex; align-items: center; justify-content: center; }
.start svg { width: 16px; height: 16px; }
.tsearch { width: 344px; height: 40px; background: #323232; display: flex; align-items: center; padding-left: 9px; color: #8f8f8f; font-size: 14px; }
.cortana { width: 20px; height: 20px; margin-right: 7px; }
.tsearch-text { white-space: nowrap; font-size: 14px; }
.mic { width: 12px; height: 18px; margin-left: auto; margin-right: 15px; }
.tk { height: 40px; display: flex; align-items: center; justify-content: center; position: relative; flex: none; }
.tk svg { width: 20px; height: 20px; }
.tk svg.big { width: 24px; height: 24px; }
.tk svg.small { width: 14px; height: 14px; }
.w48 { width: 48px; } .w52 { width: 52px; } .w46 { width: 46px; } .w44 { width: 44px; } .w45 { width: 45px; } .w26 { width: 26px; } .w22 { width: 22px; }
.tk.active { background: #2d3339; }
.run::after { content: ""; position: absolute; bottom: 0; left: 3px; right: 5px; height: 2px; background: #76b9ed; }
.run.u44::after { left: 1px; right: 0; }
.tktext { height: 40px; flex: none; display: flex; align-items: center; justify-content: center; color: #ccc; font-size: 12px; }
.cpu { width: 72px; text-align: center; line-height: 17px; font-size: 12.500px; font-family: "Liberation Sans", "Noto Sans CJK SC", sans-serif; flex: none; }
.tray { width: 24px; display: flex; justify-content: center; flex: none; }
.tray svg { width: 18px; height: 16px; }
.tray.kbd { width: 30px; }
.kbd svg { width: 24px; height: 16px; }
.kbd svg.s-tray { width: 16px; height: 16px; }
.ime-a { width: 26px; text-align: center; font: 18px "Liberation Sans", sans-serif; color: #fff; flex: none; }
.clock { width: 78px; margin-left: 0; text-align: center; font: 13.500px/18px "Liberation Sans", sans-serif; flex: none; }
.notif { width: 40px; position: relative; padding-left: 10px; }
.notif svg { width: 16px; height: 16px; }
.badge { position: absolute; left: 19px; top: 6px; width: 16px; height: 16px; border-radius: 50%; background: #333; border: 1px solid #777; color: #fff; font: 11px/14px "Liberation Sans", sans-serif; text-align: center; }

/* floating overlays */
.orb { position: absolute; left: 1007px; top: -30px; width: 48px; height: 48px; border-radius: 50%; background: #3fbb5a; box-shadow: 0 2px 3px 1px #aaa; color: #fff; font: 700 11px "Liberation Sans", sans-serif; display: flex; align-items: flex-end; justify-content: center; padding-bottom: 5px; }
.ime { position: absolute; left: 759px; top: 14px; width: 184px; height: 23px; background: #f3f7fb; border: 1px solid #aac4e0; display: flex; align-items: center; padding-left: 6px; gap: 7px; color: #1a6fc8; }
.ime svg { width: 16px; height: 16px; }
.ime-letter { font: 17px "Liberation Sans", sans-serif; width: 15px; }
.ime-comma { font: 700 11px "Liberation Sans", sans-serif; width: 12px; }
.ime-s { position: absolute; left: 737px; top: 13px; width: 27px; height: 25px; background: #ec4a1c; border-radius: 4px; transform: rotate(-10deg); color: #fff; font: 700 23px/25px "Liberation Sans", sans-serif; text-align: center; }
```
